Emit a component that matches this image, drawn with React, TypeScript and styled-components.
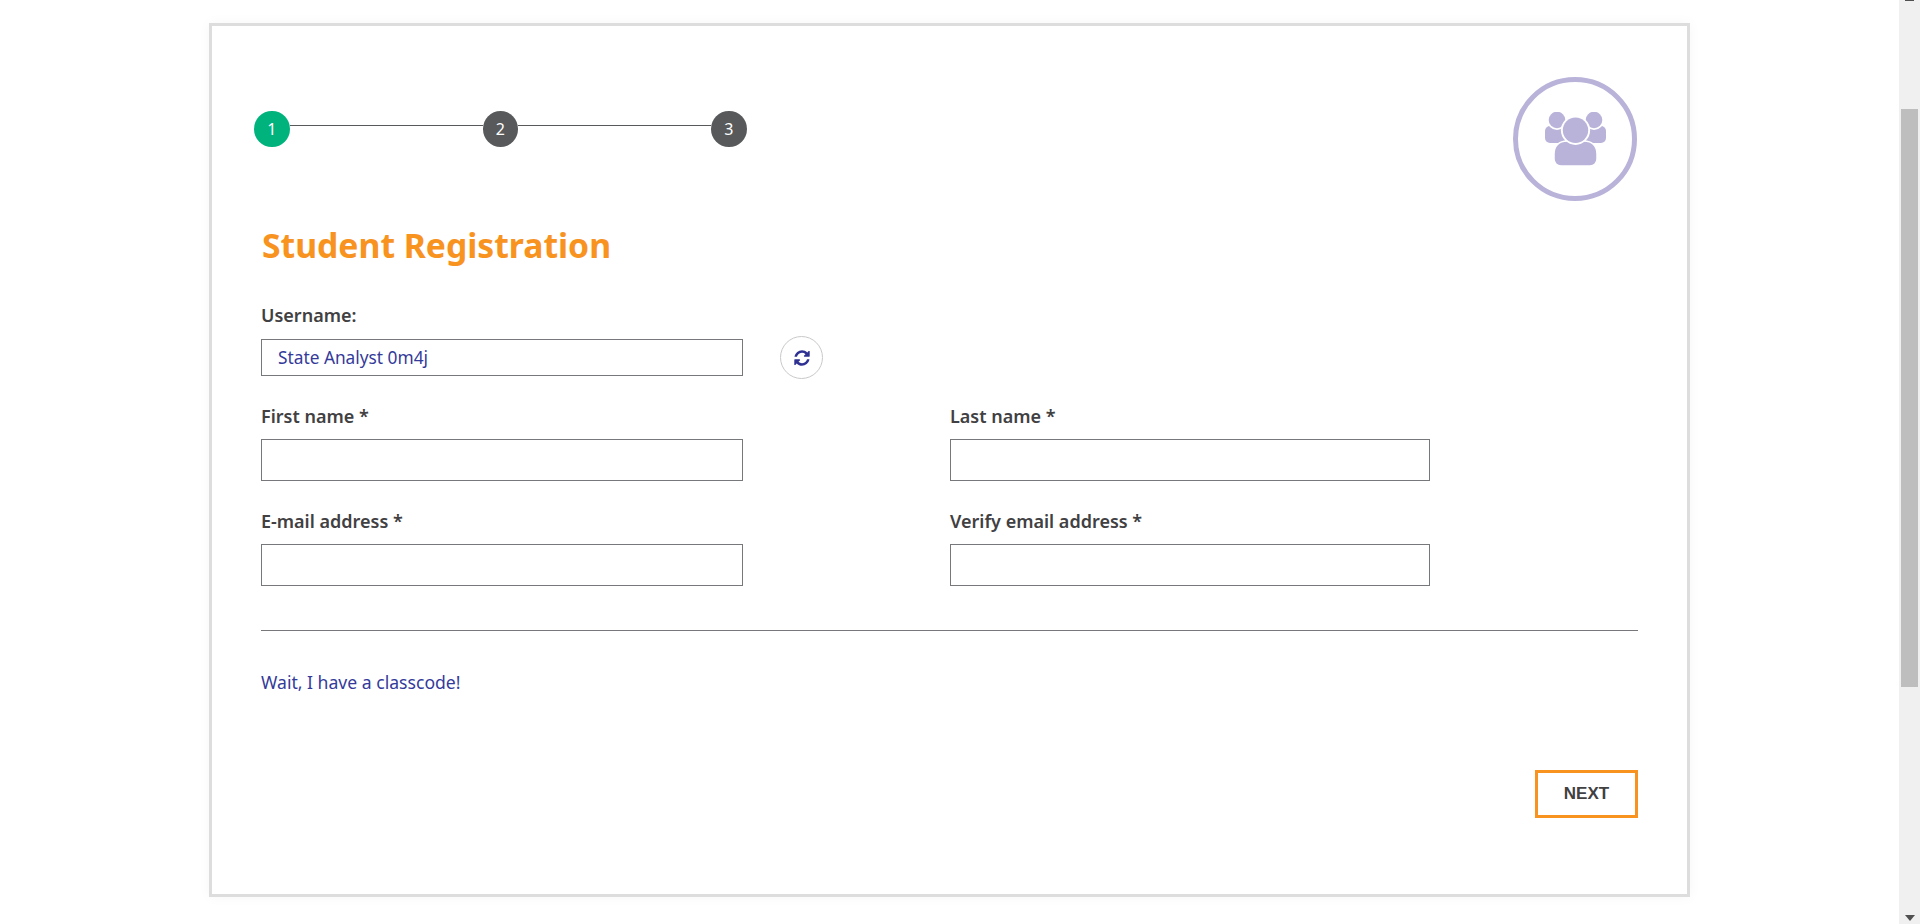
import React from 'react';
import styled, { createGlobalStyle } from 'styled-components';

const GlobalStyle = createGlobalStyle`
  html, body {
    margin: 0;
    padding: 0;
    height: 100%;
    overflow: hidden;
    background: #fff;
  }
  * {
    box-sizing: border-box;
  }
`;

const PeopleIcon = () => (
  <svg width="61" height="54" viewBox="0 0 61 54" fill="#b9b3da">
    <rect x="0" y="14" width="21" height="17" rx="5" />
    <rect x="40" y="14" width="21" height="17" rx="5" />
    <circle cx="12" cy="8" r="10" fill="#fff" />
    <circle cx="49" cy="8" r="10" fill="#fff" />
    <circle cx="12" cy="8" r="8.3" />
    <circle cx="49" cy="8" r="8.3" />
    <path
      d="M9 47V42C9 34 14 29 22 29H39C47 29 52 34 52 42V47C52 51 49 54 45 54H16C12 54 9 51 9 47Z"
      stroke="#fff"
      strokeWidth="1.5"
    />
    <circle cx="30.5" cy="18.3" r="14.6" fill="#fff" />
    <circle cx="30.5" cy="18.3" r="12.7" />
  </svg>
);

const RefreshIcon = () => (
  <svg width="18" height="18" viewBox="0 0 1792 1792" fill="currentColor">
    <path d="M1639 1056q0 5-1 7-64 268-268 434.5t-478 166.5q-146 0-282.5-55t-243.5-157l-129 129q-19 19-45 19t-45-19-19-45v-448q0-26 19-45t45-19h448q26 0 45 19t19 45-19 45l-137 137q71 66 161 102t187 36q134 0 250-65t186-179q11-17 53-117 8-23 30-23h192q13 0 22.5 9.5t9.5 22.5zm25-800v448q0 26-19 45t-45 19h-448q-26 0-45-19t-19-45 19-45l138-138q-148-137-349-137-134 0-250 65t-186 179q-11 17-53 117-8 23-30 23h-199q-13 0-22.5-9.5t-9.5-22.5v-7q65-268 270-434.5t480-166.5q146 0 284 55.5t245 156.5l130-129q19-19 45-19t45 19 19 45z" />
  </svg>
);

const App = () => {
  return (
    <Screen>
      <GlobalStyle />
      <Page>
        <Card>
          <TopRow>
            <Stepper>
              <Step $active>1</Step>
              <StepLine />
              <Step>2</Step>
              <StepLine />
              <Step>3</Step>
            </Stepper>
            <AvatarRing>
              <PeopleIcon />
            </AvatarRing>
          </TopRow>
          <Title>Student Registration</Title>
          <Label>Username:</Label>
          <UsernameRow>
            <UsernameInput readOnly value="State Analyst 0m4j" />
            <RefreshButton type="button">
              <RefreshIcon />
            </RefreshButton>
          </UsernameRow>
          <FieldGrid>
            <Field>
              <Label>First name *</Label>
              <TextInput />
            </Field>
            <Field>
              <Label>Last name *</Label>
              <TextInput />
            </Field>
            <Field>
              <Label>E-mail address *</Label>
              <TextInput />
            </Field>
            <Field>
              <Label>Verify email address *</Label>
              <TextInput />
            </Field>
          </FieldGrid>
          <Divider />
          <ClasscodeLink href="#">Wait, I have a classcode!</ClasscodeLink>
          <ButtonRow>
            <NextButton type="button">NEXT</NextButton>
          </ButtonRow>
        </Card>
      </Page>
      <Scrollbar>
        <ScrollUp />
        <ScrollThumb />
        <ScrollDown />
      </Scrollbar>
    </Screen>
  );
};

const Screen = styled.div`
  display: flex;
  width: 100%;
  height: 924px;
  overflow: hidden;
  font-family: 'Noto Sans', sans-serif;
`;

const Page = styled.div`
  flex: 1;
  display: flex;
  justify-content: center;
  align-items: flex-start;
  padding-top: 23px;
`;

const Card = styled.div`
  width: 1481px;
  height: 874px;
  background: #fff;
  border: 3px solid #dddddd;
  box-shadow: 0 0 12px rgba(0, 0, 0, 0.04);
  padding: 50px 49px 0 49px;
`;

const TopRow = styled.div`
  display: flex;
  justify-content: space-between;
  align-items: flex-start;
  padding-right: 1px;
`;

const Stepper = styled.div`
  display: flex;
  align-items: flex-start;
  margin-top: 35px;
  margin-left: -7px;
`;

const Step = styled.div<{ $active?: boolean }>`
  width: 35.5px;
  height: 36px;
  border-radius: 50%;
  display: flex;
  align-items: center;
  justify-content: center;
  background: ${(p) => (p.$active ? '#00b27c' : '#58595b')};
  color: #fff;
  font-size: 16px;
`;

const StepLine = styled.div`
  width: 193px;
  height: 1px;
  margin-top: 14px;
  background: #58595b;
`;

const AvatarRing = styled.div`
  width: 124px;
  height: 124px;
  margin-top: 1px;
  border-radius: 50%;
  border: 5px solid #b9b3da;
  display: flex;
  align-items: center;
  justify-content: center;
`;

const Title = styled.h1`
  margin: 22px 0 36px 1px;
  font-size: 33.7px;
  line-height: 44px;
  font-weight: 700;
  color: #f7931e;
`;

const Label = styled.label`
  display: block;
  font-size: 18px;
  font-weight: 600;
  line-height: 24px;
  color: #414042;
`;

const UsernameRow = styled.div`
  display: flex;
  align-items: center;
  gap: 37px;
  margin-top: 9px;
  margin-bottom: 25px;
`;

const TextInput = styled.input`
  display: block;
  width: 100%;
  height: 42px;
  border: 1px solid #77787b;
  background: #fff;
  outline: none;
  margin-top: 11px;
`;

const UsernameInput = styled(TextInput)`
  width: 482px;
  height: 37px;
  margin-top: 0;
  padding: 0 16px;
  font-family: inherit;
  font-size: 17.3px;
  color: #343a9a;
`;

const RefreshButton = styled.button`
  width: 43px;
  height: 43px;
  padding: 0;
  border-radius: 50%;
  border: 1px solid #c9c9c9;
  background: #fff;
  color: #2e3192;
  display: flex;
  align-items: center;
  justify-content: center;
`;

const FieldGrid = styled.div`
  display: grid;
  grid-template-columns: 482px 480px;
  column-gap: 207px;
  row-gap: 28px;
`;

const Field = styled.div``;

const Divider = styled.div`
  width: 1377px;
  height: 1px;
  margin-top: 44px;
  background: #77787b;
`;

const ClasscodeLink = styled.a`
  display: block;
  margin-top: 39px;
  font-size: 17.6px;
  line-height: 24px;
  color: #343a9a;
  text-decoration: none;
`;

const ButtonRow = styled.div`
  display: flex;
  justify-content: flex-end;
  width: 1377px;
  margin-top: 76px;
`;

const NextButton = styled.button`
  width: 103px;
  height: 48px;
  border: 3px solid #f7931e;
  background: #fff;
  color: #414042;
  font-family: 'Liberation Sans', sans-serif;
  font-size: 17px;
  font-weight: 700;
`;

const Scrollbar = styled.div`
  position: relative;
  width: 21px;
  height: 100%;
  flex: none;
  background: #f0f0f0;
`;

const ScrollThumb = styled.div`
  width: 17px;
  height: 578px;
  margin: 109px 0 0 2px;
  background: #bebebe;
`;

const ScrollUp = styled.div`
  position: absolute;
  top: 0;
  left: 6px;
  width: 9px;
  height: 1px;
  background: #505050;
`;

const ScrollDown = styled.div`
  position: absolute;
  bottom: 3px;
  left: 6px;
  width: 0;
  height: 0;
  border-left: 5px solid transparent;
  border-right: 5px solid transparent;
  border-top: 6px solid #505050;
`;

export default App;
